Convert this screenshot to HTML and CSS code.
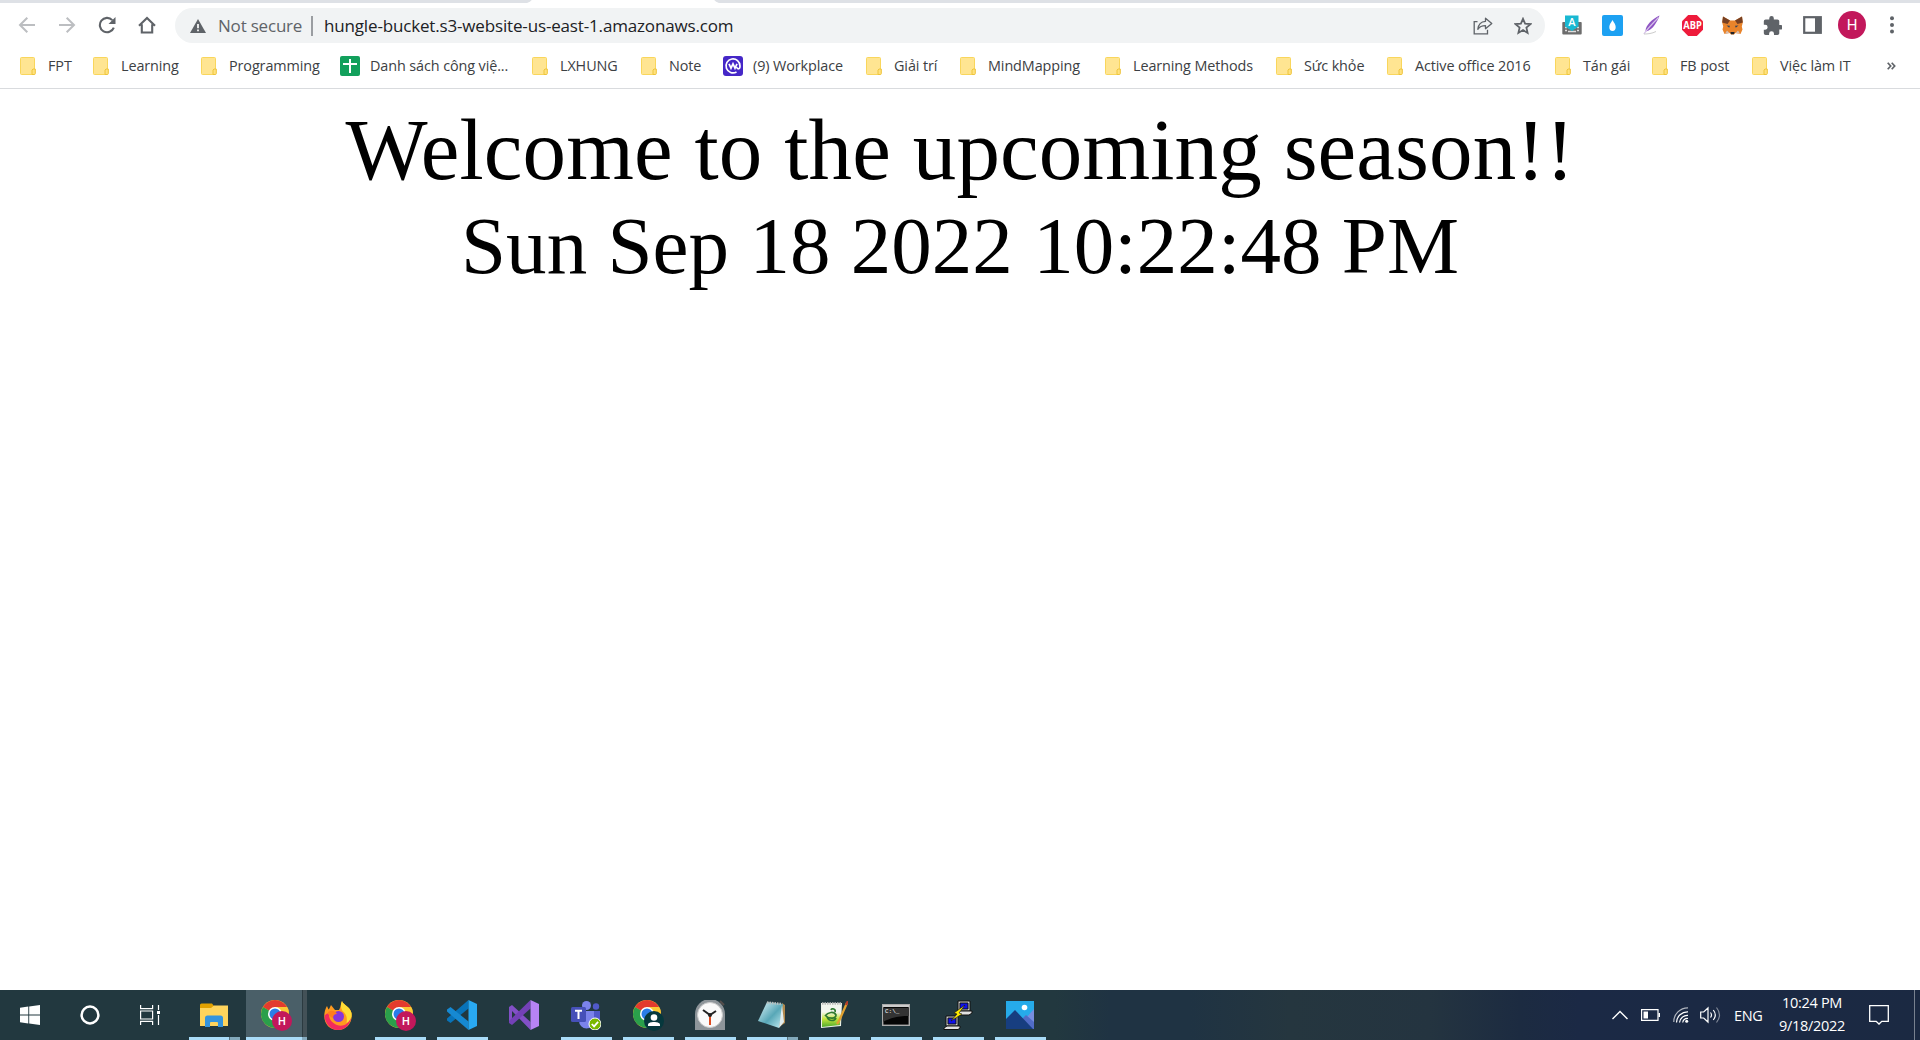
FILE: index.html
```html
<!DOCTYPE html>
<html lang="en">
<head>
<meta charset="utf-8">
<title>Upcoming season</title>
<link rel="stylesheet" href="styles.css">
</head>
<body>
<svg class="defs" width="0" height="0">
  <symbol id="folder" viewBox="0 0 16 18">
    <rect x=".5" y=".5" width="14" height="17" rx="1" fill="#ffe592" stroke="#f9d65c"/>
    <path d="M12 17.5V13l1-1h2.3v4.5a1 1 0 0 1-1 1z" fill="#ffe27e" stroke="#eec43c"/>
  </symbol>
  <symbol id="chrome" viewBox="0 0 28 28">
    <circle cx="14" cy="14" r="14" fill="#fbc02d"/>
    <path d="M14 14 1.9 7A14 14 0 0 1 26.1 7z" fill="#e33b2e"/>
    <path d="M1.9 7A14 14 0 0 0 14 28l6-10.500-6-3.500z" fill="#2a9f4b"/>
    <path d="M14 7h12.100A14 14 0 0 1 14 28l6-10.500z" fill="#fcc934"/>
    <circle cx="14" cy="14" r="7" fill="#fff"/>
    <circle cx="14" cy="14" r="5.500" fill="#2a7de9"/>
  </symbol>
</svg>

<div class="tabs"><div class="tab"></div></div>
<header class="toolbar">
  <nav class="nav">
    <span class="cell"><svg width="18" height="18" viewBox="0 0 18 18" fill="none" stroke="#bcbec1" stroke-width="2"><path d="M17 9H2M9.300 1.700 2 9l7.300 7.300"/></svg></span>
    <span class="cell"><svg width="18" height="18" viewBox="0 0 18 18" fill="none" stroke="#bcbec1" stroke-width="2"><path d="M1 9h15M8.700 1.700 16 9l-7.300 7.300"/></svg></span>
    <span class="cell"><svg width="18" height="18" viewBox="0 0 18 18"><path d="M15.800 11.600A7.200 7.200 0 1 1 14.300 4.100" fill="none" stroke="#5f6368" stroke-width="2.100"/><path d="M17.500 1v7h-7z" fill="#5f6368"/></svg></span>
    <span class="cell"><svg width="18" height="18" viewBox="0 0 18 18" fill="none" stroke="#5f6368" stroke-width="2.100"><path d="M1 9.800 9 2l8 7.800M3.800 8.200v8.300h10.400V8.200"/></svg></span>
  </nav>
  <div class="omnibox">
    <svg class="warn" width="16" height="14" viewBox="0 0 16 14"><path d="M8 0 16 14H0z" fill="#5f6368"/><path d="M8 5v4.200M8 10.500v1.800" stroke="#fff" stroke-width="1.700"/></svg>
    <span class="insecure">Not secure</span>
    <i class="sep"></i>
    <span class="url">hungle-bucket.s3-website-us-east-1.amazonaws.com</span>
    <span class="cell"><svg width="20" height="18" viewBox="0 0 20 18" fill="none" stroke="#5f6368" stroke-width="1.300"><path d="M4.500 4.700H1.200v12.200h13.300v-4.200"/><path d="M12.500 1.200 18.800 6.400l-6.300 5.300V8.600C9 8.600 6.500 9.600 4.800 12.300 5.300 7.500 8 4.600 12.500 4.300z" stroke-linejoin="round"/></svg></span>
    <span class="cell"><svg width="18" height="18" viewBox="0 0 18 18"><path d="m9 1.800 2.100 4.800 5.400.5-4.100 3.500 1.200 5.300L9 13.100l-4.600 2.800 1.200-5.300-4.100-3.500 5.400-.5z" fill="none" stroke="#5f6368" stroke-width="1.800"/></svg></span>
  </div>
  <div class="extensions">
    <span class="cell"><svg width="20" height="20" viewBox="0 0 20 20"><path d="M1 7h18a1 1 0 0 1 .7 1v10.500a1 1 0 0 1-1 1H1.300a1 1 0 0 1-1-1V8A1 1 0 0 1 1 7z" fill="#6d6d6d"/><path d="M3 12.500h14M3 15.500h2m10 0h2" stroke="#ddd" stroke-width="1.500" stroke-dasharray="2 1"/><path d="M6 16.500h8" stroke="#ddd" stroke-width="1.500"/><path d="M3 .5h13.500v11L10 16 3 11.500z" fill="#19b8d2"/><text x="9.800" y="11" text-anchor="middle" class="letter-a">A</text></svg></span>
    <span class="cell"><svg width="21" height="21" viewBox="0 0 21 21"><rect width="21" height="21" rx="2" fill="#1da1f2"/><path d="M10.500 5c1.500 2.800 3.200 4.500 3.200 7a3.200 4 0 0 1-6.400 0c0-2.500 1.700-4.200 3.200-7z" fill="#fff"/></svg></span>
    <span class="cell"><svg width="18" height="20" viewBox="0 0 18 20"><path d="M16.500.5C9 4.500 2.500 10 2.500 16.500c3.500-.5 7-3 9.500-7C13.500 7 15.500 4 16.500.5z" fill="#8f55c4"/><path d="M15.500 2.500C11 7 5 13 .8 19" fill="none" stroke="#d6c2e9" stroke-width="1.200"/><path d="M1 19c4 0 8-.5 12-2.500" fill="none" stroke="#ccc"/></svg></span>
    <span class="cell"><svg width="21" height="21" viewBox="0 0 21 21"><path d="M6.200 0h8.600L21 6.200v8.600L14.800 21H6.200L0 14.800V6.200z" fill="#ee1b3b"/><text x="10.500" y="14.300" text-anchor="middle" class="abp" textLength="18.500" lengthAdjust="spacingAndGlyphs">ABP</text></svg></span>
    <span class="cell"><svg width="21" height="19" viewBox="0 0 21 19"><path d="M1 .5 8 4.500h5L20 .5l.8 6-1 4 .7 3-2 4.500-5-1-1.500 1.500H9L7.500 17l-5 1-2-4.500.7-3-1-4z" fill="#e9842b"/><path d="M1 .5 8 4.500 5.500 8 .2 6.500zM20 .5l-7 4L15.500 8l5.300-1.500z" fill="#774022"/><path d="m4.500 9.500 3.500.3-.8 1.900zM16.500 9.500l-3.500.3.800 1.900z" fill="#33435c"/><path d="M5 14.500 3 17.700l4.500-.8zM16 14.500l2 3.200-4.500-.8z" fill="#d6bfb2"/><path d="M8.300 16h4.400l-.8 2.300H9.100z" fill="#20242b"/></svg></span>
    <span class="cell"><svg width="20" height="20" viewBox="0 0 22 22"><path d="M20.500 11H19V7a2 2 0 0 0-2-2h-4V3.500a2.500 2.500 0 0 0-5 0V5H4a2 2 0 0 0-2 2v3.800h1.500a2.700 2.700 0 0 1 0 5.400H2V20a2 2 0 0 0 2 2h3.800v-1.500a2.700 2.700 0 0 1 5.400 0V22H17a2 2 0 0 0 2-2v-4h1.500a2.500 2.500 0 0 0 0-5z" fill="#5f6368"/></svg></span>
    <span class="cell"><svg width="19" height="18" viewBox="0 0 19 18"><rect x="1.200" y="1.200" width="16.600" height="15.600" fill="#fff" stroke="#5f6368" stroke-width="2.200"/><path d="M12 1h6v16h-6z" fill="#5f6368"/></svg></span>
    <span class="cell"><b class="avatar">H</b></span>
    <span class="cell"><svg width="4" height="18" viewBox="0 0 4 18" fill="#5f6368"><circle cx="2" cy="2.200" r="2"/><circle cx="2" cy="9" r="2"/><circle cx="2" cy="15.500" r="2"/></svg></span>
  </div>
</header>

<div class="bookmarks">
  <span class="bm"><svg class="fold"><use href="#folder"/></svg>FPT</span>
  <span class="bm"><svg class="fold"><use href="#folder"/></svg>Learning</span>
  <span class="bm"><svg class="fold"><use href="#folder"/></svg>Programming</span>
  <span class="bm wide"><svg width="20" height="20" viewBox="0 0 20 20"><rect width="20" height="20" rx="2" fill="#12a05c"/><path d="M10 3v14M3 8h14" stroke="#fff" stroke-width="2"/></svg>Danh sách công việ...</span>
  <span class="bm"><svg class="fold"><use href="#folder"/></svg>LXHUNG</span>
  <span class="bm"><svg class="fold"><use href="#folder"/></svg>Note</span>
  <span class="bm wide"><svg width="20" height="20" viewBox="0 0 20 20"><rect width="20" height="20" rx="3" fill="#4527c7"/><path d="M13.500 16A7 7 0 1 1 17 10c0 3.500-2.500 3.500-3.500 1" fill="none" stroke="#fff" stroke-width="1.700"/><path d="m6 7.800 2 4.400 2-4.400 2 4.400 2-4.400" fill="none" stroke="#fff" stroke-width="1.700"/></svg>(9) Workplace</span>
  <span class="bm"><svg class="fold"><use href="#folder"/></svg>Giải trí</span>
  <span class="bm"><svg class="fold"><use href="#folder"/></svg>MindMapping</span>
  <span class="bm"><svg class="fold"><use href="#folder"/></svg>Learning Methods</span>
  <span class="bm"><svg class="fold"><use href="#folder"/></svg>Sức khỏe</span>
  <span class="bm"><svg class="fold"><use href="#folder"/></svg>Active office 2016</span>
  <span class="bm"><svg class="fold"><use href="#folder"/></svg>Tán gái</span>
  <span class="bm"><svg class="fold"><use href="#folder"/></svg>FB post</span>
  <span class="bm"><svg class="fold"><use href="#folder"/></svg>Việc làm IT</span>
  <span class="more"><svg width="9" height="8" viewBox="0 0 9 8" fill="none" stroke="#5f6368" stroke-width="1.700"><path d="m.7.700 3 3.300-3 3.300M4.700.700l3 3.300-3 3.300"/></svg></span>
</div>

<main class="page">
  <div class="welcome">Welcome to the upcoming season!!</div>
  <div class="clock">Sun Sep 18 2022 10:22:48 PM</div>
</main>

<footer class="taskbar">
  <span class="sys"><svg width="20" height="20" viewBox="0 0 20 20" fill="#fff"><path d="M0 2.800 8.300 1.600v7.900H0zM9.200 1.500 20 0v9.500H9.200zM0 10.400h8.300v8L0 17.200zM9.200 10.400H20V20L9.200 18.500z"/></svg></span>
  <span class="sys"><svg width="20" height="20" viewBox="0 0 20 20"><circle cx="10" cy="10" r="8.400" fill="none" stroke="#fff" stroke-width="2.500"/></svg></span>
  <span class="sys"><svg width="20" height="20" viewBox="0 0 20 20" fill="none" stroke="#fff" stroke-width="1.200"><path d="M.6 0v3.600h12V0M.6 20v-3.600h12V20M.6 6h12v8H.6zM18.500 0v5M18.500 10v10"/><path d="M17 6h3v3h-3z" fill="#fff" stroke="none"/></svg></span>
  <div class="apps">
    <span class="app open stack"><svg width="28" height="24" viewBox="0 0 28 24"><path d="M0 2a1.500 1.500 0 0 1 1.500-1.500H12l2 2.500v4H0z" fill="#e2a100"/><path d="M0 5h11l3-2.500h14V23H0z" fill="#ffd45c"/><path d="M5 24V15a2.500 2.500 0 0 1 2.500-2.500h13A2.500 2.500 0 0 1 23 15v9h-5v-4a1 1 0 0 0-1-1h-6a1 1 0 0 0-1 1v4z" fill="#3594dd"/></svg></span>
    <span class="app active"><svg width="31" height="31" viewBox="0 0 31 31"><use href="#chrome" width="28" height="28"/><circle cx="21" cy="21" r="10" fill="#c2185b"/><text x="21" y="25" text-anchor="middle" class="badge">H</text></svg></span>
    <span class="app"><svg width="28" height="29" viewBox="0 0 28 29"><path d="M18 0c1 4 8 5 9.500 12C29 21 23 29 14 29S-1 22 .5 12C1 9 2 6.500 3 5l1.500 3.500C6 7 6 5.500 7 4l4 5h4c2-3 1.500-6 3-9z" fill="#ff9a1f"/><path d="M18 0c1 4 8 5 9.500 12 .8 5-2 9-5 10 1-5 0-9-4-12-2-3-2-7-.5-10z" fill="#ffdd35"/><path d="M.5 15C1 23 7 29 14 29s12-5 13-12c-3 7-9 9-14 7S5 18 5 14c-1-3-3-1-4.500 1z" fill="#f32b5e"/><circle cx="14.500" cy="15.500" r="5.500" fill="#8736db"/><path d="M4 11c5-3 8 0 9 2-3 0-4 2-4 4-3-1-5-3-5-6z" fill="#ff7d1d"/></svg></span>
    <span class="app open"><svg width="31" height="31" viewBox="0 0 31 31"><use href="#chrome" width="28" height="28"/><circle cx="21" cy="21" r="10" fill="#c2185b"/><text x="21" y="25" text-anchor="middle" class="badge">H</text></svg></span>
    <span class="app open"><svg width="30" height="30" viewBox="0 0 30 30"><path d="M21.500 0v8.500L3.500 23 0 20.500v-2z" fill="#0873b9"/><path d="m3.500 7 18 14.500V30L0 11.500v-2z" fill="#1689d2"/><path d="M21.500 0 30 4v22l-8.500 4z" fill="#29a9f2"/></svg></span>
    <span class="app"><svg width="30" height="30" viewBox="0 0 30 30"><path d="m0 7 3-2 18.500 17v8L3 11v10l-3 2z" fill="#8250c6"/><path d="M21.500 0v8.500L3 25l-3-2 0-2z" fill="#7341b7"/><path d="M21.500 0 30 4v22l-8.500 4z" fill="#b783f4"/></svg></span>
    <span class="app open"><svg width="30" height="30" viewBox="0 0 30 30"><circle cx="15.500" cy="5.500" r="4.500" fill="#7b83eb"/><circle cx="25" cy="6.500" r="3.200" fill="#5059c9"/><path d="M21 11h8v8a5 5 0 0 1-8 3z" fill="#5059c9"/><path d="M8 11h15v10a7.500 7.500 0 0 1-15 0z" fill="#7b83eb"/><rect y="7" width="15" height="15" rx="1.500" fill="#4650b8"/><path d="M4 10.800h7M7.500 11v8" stroke="#fff" stroke-width="2"/><circle cx="24" cy="24" r="6" fill="#7ab800" stroke="#fff"/><path d="m20.800 24 2.300 2.400 4-4.500" fill="none" stroke="#fff" stroke-width="1.800"/></svg></span>
    <span class="app open"><svg width="31" height="31" viewBox="0 0 31 31"><use href="#chrome" width="28" height="28"/><circle cx="21" cy="21" r="10" fill="#06383d"/><circle cx="21" cy="17.500" r="3.300" fill="#fff"/><path d="M15 26v-1.500c0-3.500 12-3.500 12 0V26z" fill="#fff"/></svg></span>
    <span class="app open"><svg width="30" height="30" viewBox="0 0 30 30"><path d="M0 30V14a15 15 0 0 1 30 0v16z" fill="#8e959a"/><path d="m25 1 4 4" stroke="#554e4b" stroke-width="2"/><circle cx="15" cy="15" r="12.500" fill="#fafafa" stroke="#ccc"/><path d="m8 10 7 5 6-4" fill="none" stroke="#222" stroke-width="2"/><path d="M15 15v10" stroke="#df4b20" stroke-width="2"/><circle cx="15" cy="15" r="2" fill="#222"/></svg></span>
    <span class="app open stack"><svg width="28" height="28" viewBox="0 0 28 28"><defs><linearGradient id="np" x2="1" y2="1"><stop stop-color="#e2f6fa"/><stop offset=".55" stop-color="#58a7b7"/><stop offset="1" stop-color="#c5eef4"/></linearGradient></defs><path d="m24 2 3 2v18l-6 4z" fill="#b1884c"/><path d="m9 1 16 2-4 24L0 20z" fill="url(#np)"/><path d="m24 4 2 17-5 6z" fill="#e1eef0"/><path d="m9 1.500 15 1.500" stroke="#b8bfbe" stroke-width="2.500" stroke-dasharray="1.500 1"/></svg></span>
    <span class="app open"><svg width="28" height="28" viewBox="0 0 28 28"><defs><linearGradient id="grass" x2="0" y2="1"><stop offset=".35" stop-color="#f3f6ef"/><stop offset=".65" stop-color="#c5e53c"/><stop offset="1" stop-color="#4faa2c"/></linearGradient></defs><path d="M1 2h21l-1 23-20 2z" fill="#eef1ea"/><path d="M2 3h19l-1 21-18 2z" fill="url(#grass)"/><path d="M2 2.500h20" stroke="#bbb" stroke-width="2.500" stroke-dasharray="1.500 1"/><path d="M5 15c3-4 9-5 11-1 0 4-7 4-10 1m1 1c2 5 8 4 9 1M11 9c1-2.500 5-1 4 2" fill="none" stroke="#2f7a30" stroke-width="1.700"/><path d="m27 2-8 18-2 3" fill="none" stroke="#e1a130" stroke-width="2.300"/><path d="m28 0-2 4" stroke="#b73b28" stroke-width="2.300"/></svg></span>
    <span class="app open"><svg width="28" height="22" viewBox="0 0 28 22"><rect x=".7" y=".7" width="26.600" height="20.600" fill="#050505" stroke="#aaa" stroke-width="1.400"/><path d="M1 2h26" stroke="#ccc" stroke-width="2"/><path d="M1 4h26v8C16 12 8 14 1 18z" fill="#333"/><text x="3" y="9" class="prompt">C:\_</text></svg></span>
    <span class="app open"><svg width="30" height="30" viewBox="0 0 30 30" stroke="#111"><path d="M15 1h12v10H15z" fill="#ccc"/><path d="M17 3h8v6h-8z" fill="#1010e8"/><path d="m13 13 4-2h12v2l-3 2H13z" fill="#e1e1e1"/><path d="M3 16h12v10H3z" fill="#ccc"/><path d="M5 18h8v6H5z" fill="#1010e8"/><path d="m1 28 3-2h13v2l-2 1.500H1z" fill="#e1e1e1"/><path d="M22 5 11 13l3 1-6 7 11-7-3-1z" fill="#ffec00" stroke-width=".6"/></svg></span>
    <span class="app open"><svg width="28" height="28" viewBox="0 0 28 28"><path d="M0 0h28v28H0z" fill="#26abea"/><path d="M28 8v20H14l7-12z" fill="#788ee0"/><path d="m14 20 6-6 8 7v7H14z" fill="#516cc7"/><path d="M0 18 9 9l18 19H0z" fill="#173e80"/><circle cx="18.500" cy="6.500" r="2.800" fill="#fff"/></svg></span>
  </div>
  <div class="tray">
    <svg class="chev" width="16" height="10" viewBox="0 0 16 10" fill="none" stroke="#fff" stroke-width="1.400"><path d="m.5 9 7.500-7.500L15.500 9"/></svg>
    <svg class="batt" width="19" height="12" viewBox="0 0 19 12"><path d="M.6.600h16.400v10.800H.6z" fill="none" stroke="#fff" stroke-width="1.200"/><path d="M2.500 2.500h4.500v7H2.500zM17.500 4H19v4h-1.500z" fill="#fff"/></svg>
    <svg class="wifi" width="16" height="16" viewBox="0 0 16 16" fill="none" stroke="#fff" stroke-width="1.200"><path d="M.8 15A14 14 0 0 1 15 .8" opacity=".65"/><path d="M3.500 15.500A11 11 0 0 1 15 4.800M6.500 15.500A8 8 0 0 1 15 8.300M9.700 15.500a5 5 0 0 1 5.300-4"/><circle cx="13.700" cy="14.300" r="1.500" fill="#fff" stroke="none"/></svg>
    <svg class="vol" width="21" height="18" viewBox="0 0 21 18" fill="none" stroke="#fff" stroke-width="1.200"><path d="M.7 6h3L8 2v14l-4.300-4h-3z"/><path d="M10.500 6.500q2 2.500 0 5M13.300 4q4 5 0 10"/><path d="M16.500 1.500q6 7.500 0 15" opacity=".45"/></svg>
    <span class="lang">ENG</span>
    <div class="datetime"><span>10:24 PM</span><span>9/18/2022</span></div>
    <svg class="note" width="20" height="20" viewBox="0 0 20 20" fill="none" stroke="#fff" stroke-width="1.300"><path d="M.7.700h18.600v15.600h-6.500L10 19l-2.800-2.700H.7z"/></svg>
    <i class="desktop"></i>
  </div>
</footer>
</body>
</html>
```
FILE: styles.css
```css
* { box-sizing: border-box; }
body {
  margin: 0;
  width: 1920px;
  height: 1040px;
  display: flex;
  flex-direction: column;
  overflow: hidden;
  background: #fff;
  font-family: "Open Sans", "Noto Sans", sans-serif;
}
svg { display: block; flex: none; }
.defs { position: absolute; }

.tabs { height: 3px; background: #dee1e6; padding-left: 527px; }
.tab { width: 192px; height: 3px; background: #fff; clip-path: polygon(2.500% 0, 97.500% 0, 98.500% 60%, 100% 100%, 0 100%, 1.500% 60%); }

.toolbar { height: 44px; display: flex; align-items: center; padding: 0 7.500px 0 7px; }
.nav, .extensions { display: flex; }
.cell { width: 40px; height: 40px; display: flex; align-items: center; justify-content: center; flex: none; }
.omnibox {
  width: 1370px;
  height: 35px;
  margin: 1px 7px 0 8px;
  padding: 0 2px 0 15px;
  border-radius: 18px;
  background: #f1f3f4;
  display: flex;
  align-items: center;
  font-size: 17px;
  line-height: 24px;
}
.insecure { width: 93px; margin-left: 12px; color: #5f6368; letter-spacing: -.2px; white-space: nowrap; }
.sep { width: 2px; height: 20px; background: #9a9da1; }
.url { margin-left: 11px; flex: 1; color: #202124; letter-spacing: -.160px; }
.letter-a { font: 600 11px "Open Sans", sans-serif; fill: #fff; }
.abp { font: 700 10.500px "Open Sans", sans-serif; fill: #fff; }
.avatar { width: 28px; height: 28px; border-radius: 50%; background: #c2185b; color: #fff; font: 400 15px/28px Roboto, sans-serif; text-align: center; }

.bookmarks {
  height: 42px;
  padding: 0 0 4px 20px;
  border-bottom: 1px solid #d9dbde;
  display: grid;
  grid-template-columns: 73px 108px 139px 192px 109px 82px 143px 94px 145px 171px 111px 168px 97px 100px 135px 9px;
  align-items: center;
  font-size: 14.400px;
  letter-spacing: -.1px;
  color: #3c4043;
}
.bm { display: flex; align-items: center; gap: 12px; white-space: nowrap; height: 37px; }
.bm.wide { gap: 10px; }
.fold { width: 16px; height: 18px; }

.page { flex: 1; padding-top: 11px; text-align: center; color: #000; font-family: "Liberation Serif", "Times New Roman", serif; }
.welcome { font-size: 87px; line-height: 100px; letter-spacing: .120px; }
.clock { font-size: 81px; line-height: 92px; letter-spacing: .040px; }

.taskbar {
  height: 50px;
  display: flex;
  align-items: stretch;
  background: linear-gradient(90deg, #22383f 0, #22383f 1055px, #1f3343 1110px, #1f3343 1190px, #25363f 1290px, #243440 1430px, #1c2b41 1520px, #1b2945 1580px, #1b2942 100%);
  color: #fff;
}
.sys { width: 60px; display: flex; align-items: center; justify-content: center; }
.apps { display: flex; margin-left: 3px; }
.app { width: 62px; display: flex; align-items: center; justify-content: center; background: no-repeat 6px 47px / 51px 3px; }
.open { background-image: linear-gradient(#a9dcf8, #a9dcf8); }
.stack { background-image: linear-gradient(90deg, #a9dcf8 0 40px, #57727f 40px 41px, #82a9bb 41px); }
.active { background: linear-gradient(90deg, #a9dcf8 0 56px, #83a9bc 56px) no-repeat 1px 47px / 61px 3px, linear-gradient(90deg, transparent 1px, #4a5f68 1px 57px, #2b3a40 57px 58px, #435157 58px); }
.badge { font: 500 11px Roboto, sans-serif; fill: #fff; }
.prompt { font: 6px "Liberation Mono", monospace; fill: #fff; }

.tray { margin-left: auto; display: flex; align-items: center; font-size: 14.500px; letter-spacing: -.3px; }
.batt { margin-left: 13px; }
.wifi { margin-left: 13px; }
.vol { margin-left: 11px; }
.lang { margin-left: 13px; width: 30px; }
.datetime { width: 96px; display: flex; flex-direction: column; text-align: center; line-height: 23px; padding-bottom: 2px; }
.note { margin-left: 9px; }
.desktop { width: 6px; height: 50px; margin-left: 25px; border-left: 1px solid #78818f; }
```
